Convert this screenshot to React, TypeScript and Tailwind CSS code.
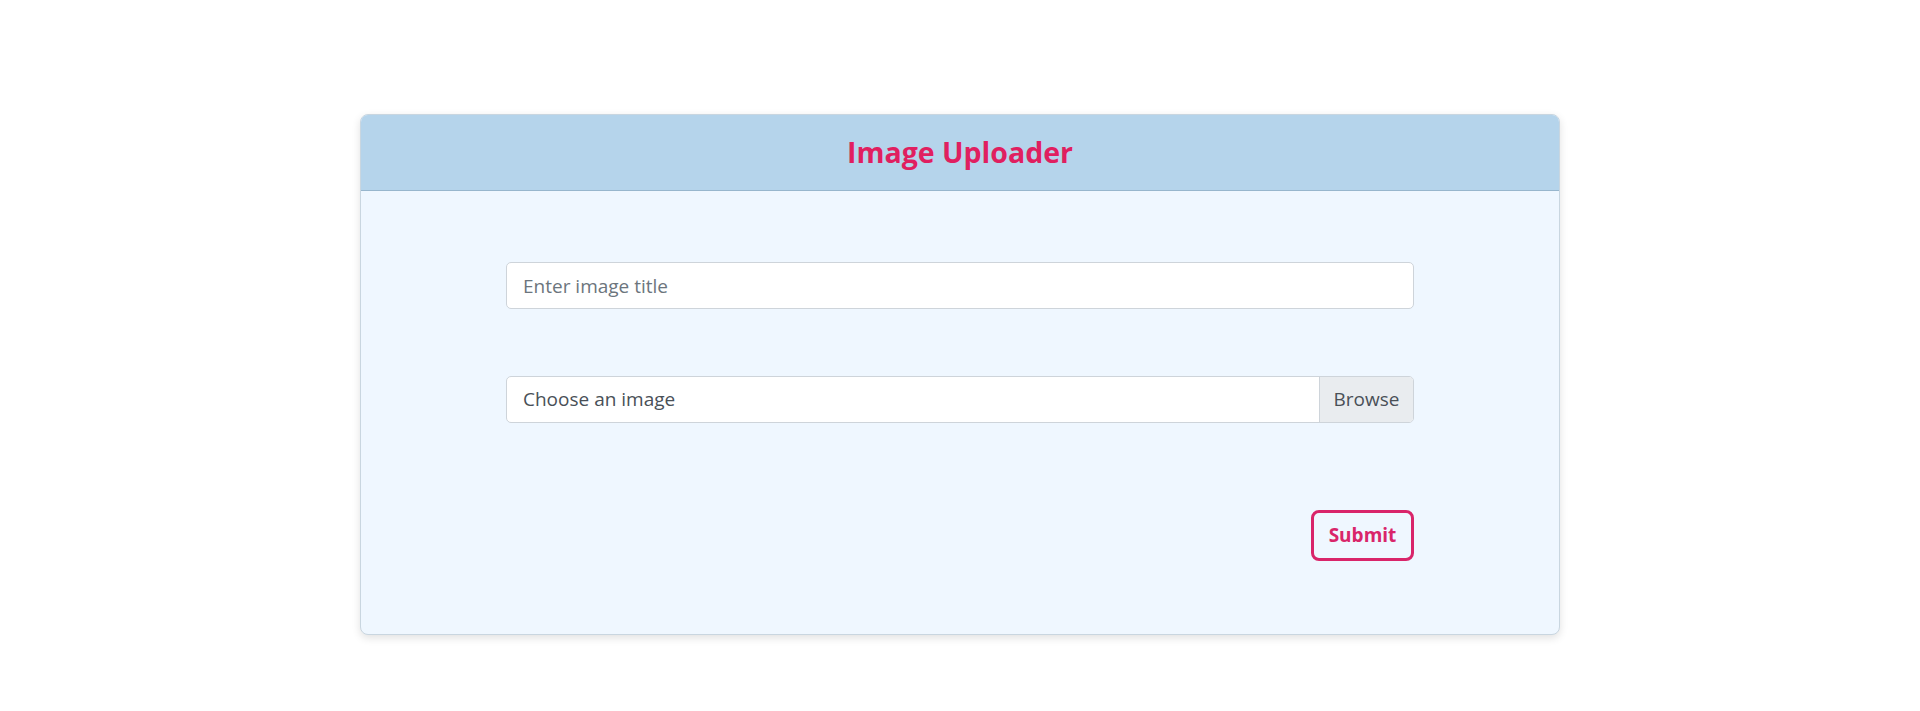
export default function App() {
  return (
    <div className="min-h-[711px] bg-white pt-[114px] font-['Open_Sans',sans-serif]">
      <div className="mx-auto w-[1200px] overflow-hidden rounded-[8px] border border-[#c9d6e0] bg-[#eff7ff] shadow-[0_3px_8px_rgba(0,0,0,0.12)]">
        <div className="flex h-[76px] items-center justify-center border-b border-[#97b6cd] bg-[#b5d4eb]">
          <h3 className="text-[28.5px] font-bold leading-none text-[#e01f60]">Image Uploader</h3>
        </div>
        <form className="mx-auto flex w-[908px] flex-col pt-[71px] pb-[73px]">
          <input
            type="text"
            placeholder="Enter image title"
            className="h-[47px] w-full rounded-[5px] border border-[#ced4da] bg-white px-4 text-[19px] text-[#495057] outline-none placeholder:text-[#6c757d]"
          />
          <div className="mt-[67px] flex h-[47px] w-full overflow-hidden rounded-[5px] border border-[#ced4da] bg-white">
            <span className="flex flex-1 items-center px-4 text-[19px] text-[#495057]">Choose an image</span>
            <span className="flex w-[94px] items-center justify-center border-l border-[#ced4da] bg-[#e9ecef] text-[19px] text-[#495057]">
              Browse
            </span>
          </div>
          <div className="mt-[87px] flex justify-end">
            <button
              type="button"
              className="h-[51px] w-[103px] rounded-[8px] border-[3px] border-[#d9256a] bg-transparent text-[19px] font-bold text-[#d9256a]"
            >
              Submit
            </button>
          </div>
        </form>
      </div>
    </div>
  );
}
